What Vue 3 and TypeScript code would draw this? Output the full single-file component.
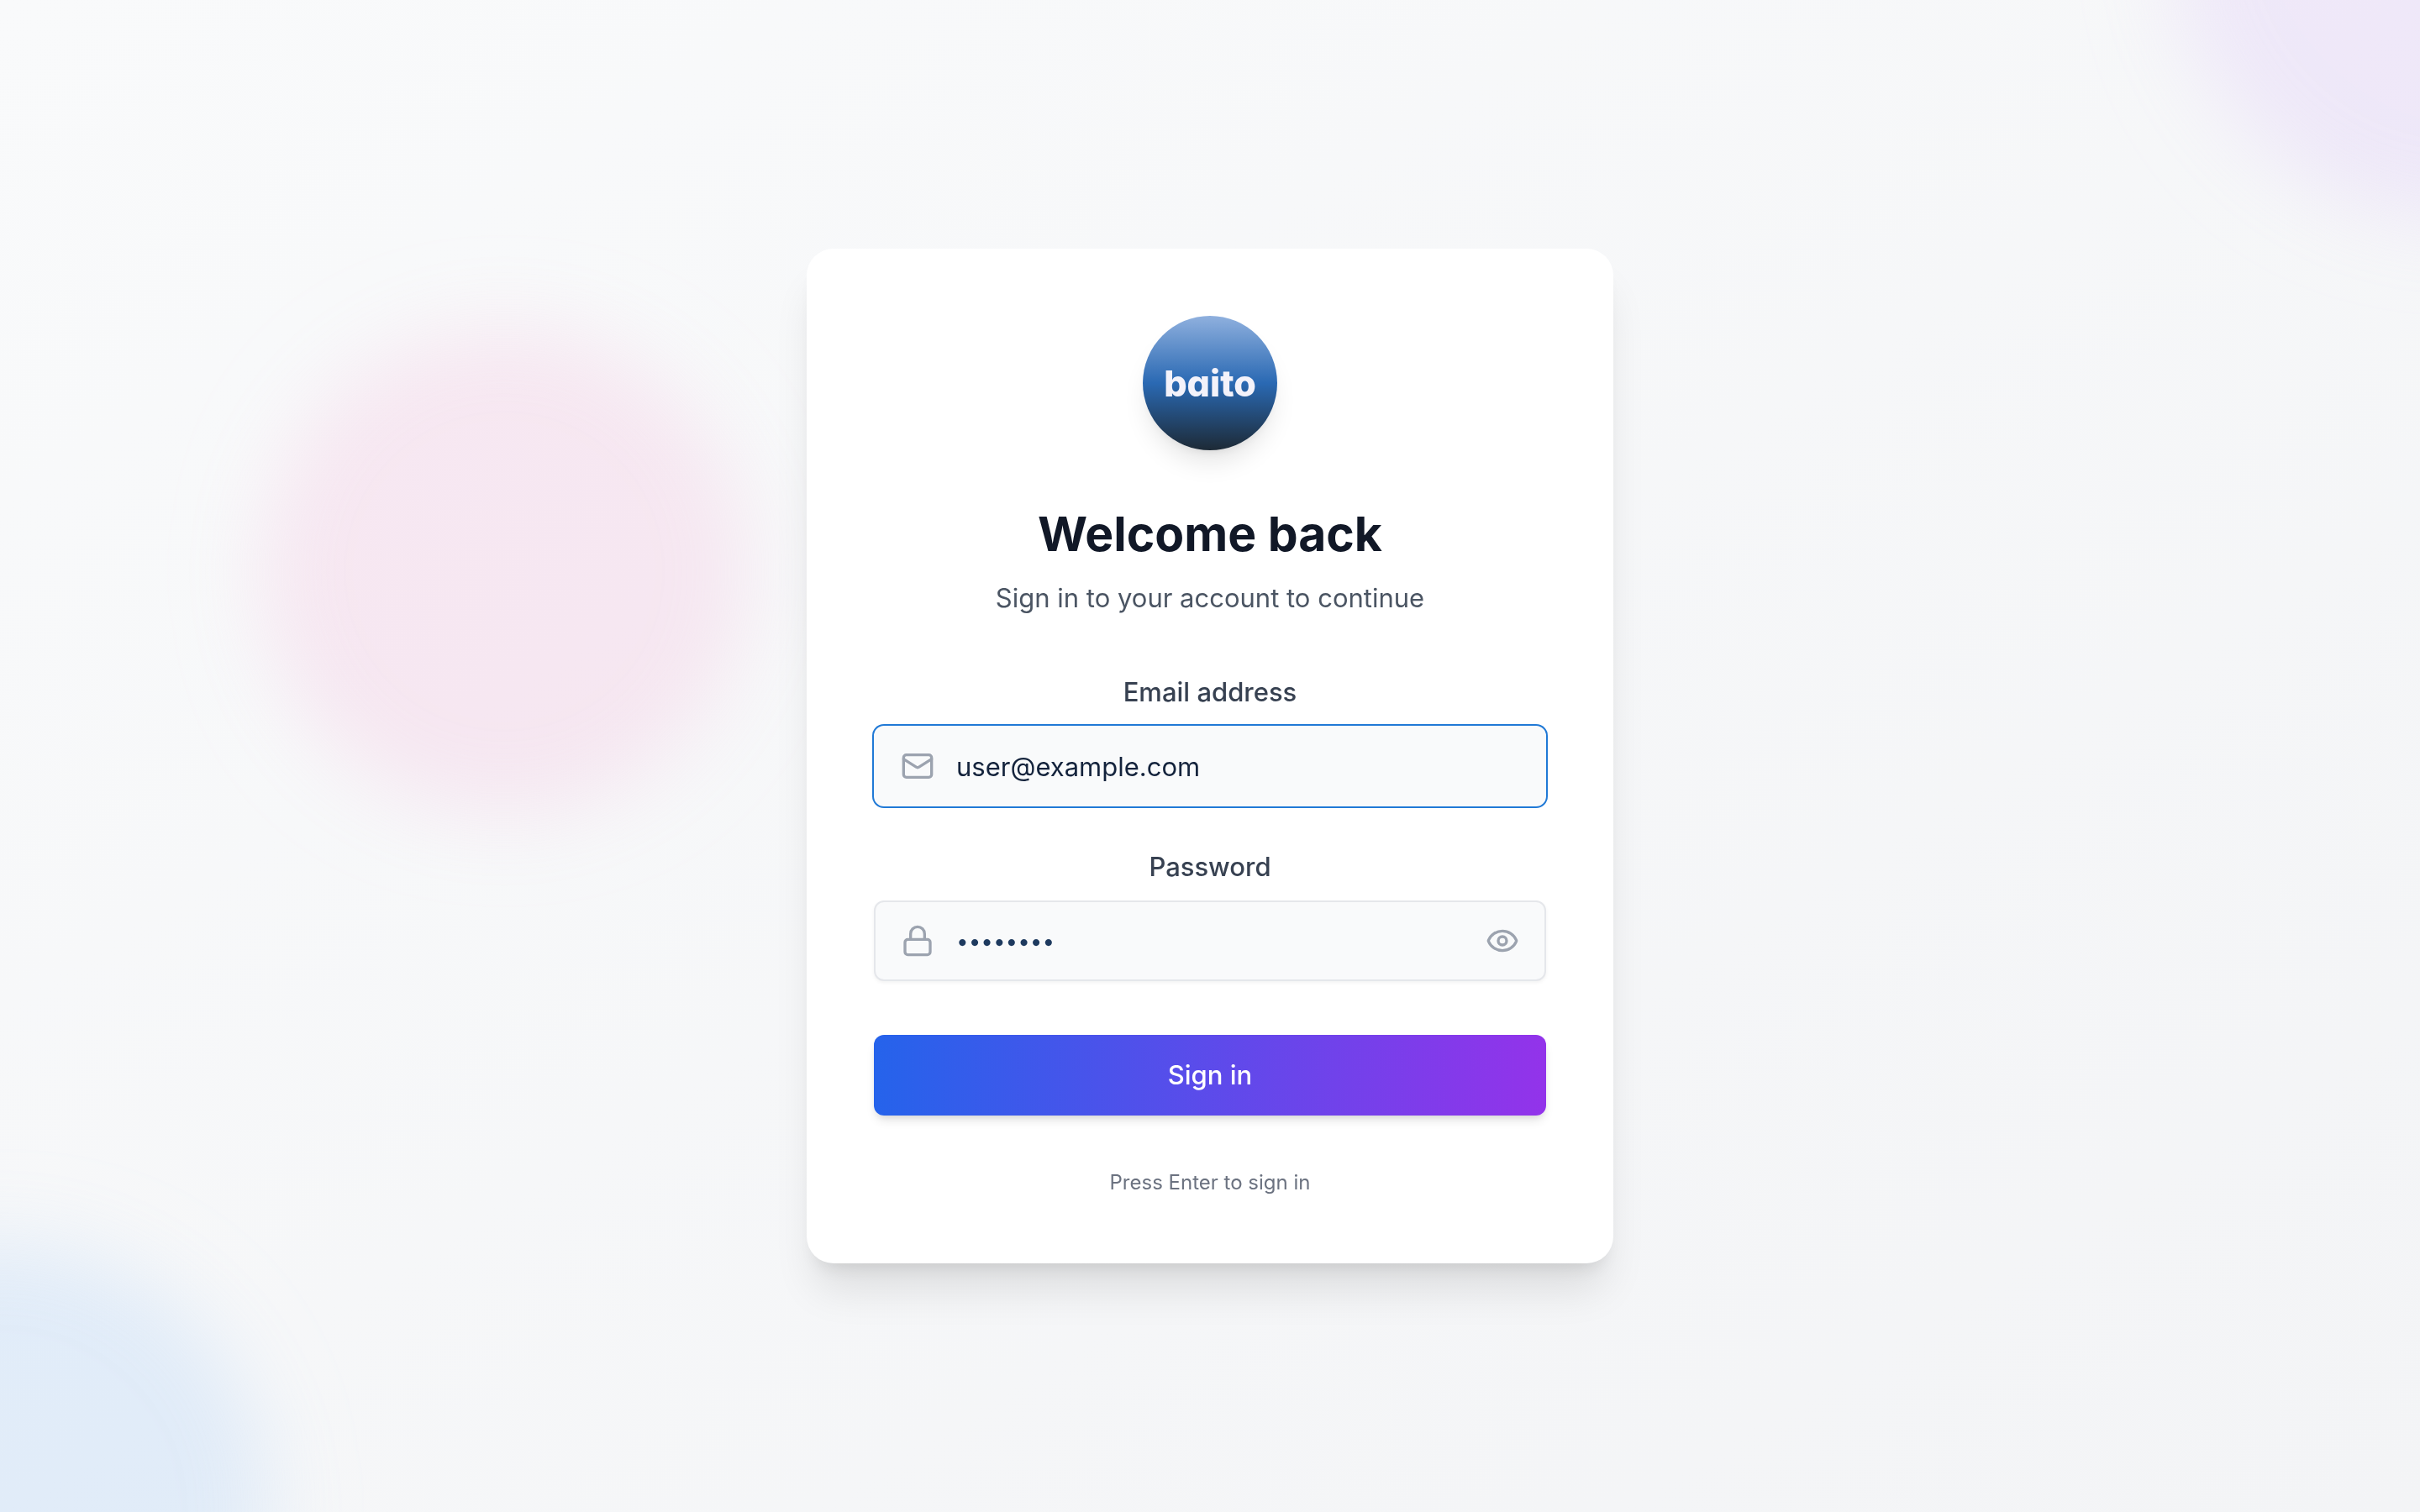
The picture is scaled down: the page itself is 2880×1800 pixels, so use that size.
<script setup lang="ts">
import { ref } from 'vue'

const email = ref('user@example.com')
const password = ref('password')
const showPassword = ref(false)
</script>

<template>
  <main class="page">
    <div class="blob blob-purple" aria-hidden="true"></div>
    <div class="blob blob-blue" aria-hidden="true"></div>
    <div class="blob blob-pink" aria-hidden="true"></div>

    <section class="card">
      <div class="logo"><span class="wordmark">baito</span></div>
      <h1>Welcome back</h1>
      <p class="subtitle">Sign in to your account to continue</p>

      <form @submit.prevent>
        <div class="field">
          <label for="email">Email address</label>
          <div class="control">
            <svg class="icon lead" viewBox="0 0 24 24" aria-hidden="true">
              <rect x="2" y="4" width="20" height="16" rx="2" />
              <path d="m22 7-8.97 5.7a1.94 1.94 0 0 1-2.06 0L2 7" />
            </svg>
            <input id="email" v-model="email" class="active" type="email" autocomplete="email" />
          </div>
        </div>

        <div class="field">
          <label for="password">Password</label>
          <div class="control">
            <svg class="icon lead" viewBox="0 0 24 24" aria-hidden="true">
              <rect x="3" y="11" width="18" height="11" rx="2" />
              <path d="M7 11V7a5 5 0 0 1 10 0v4" />
            </svg>
            <input
              id="password"
              v-model="password"
              class="secret"
              :type="showPassword ? 'text' : 'password'"
              autocomplete="current-password"
            />
            <button
              class="toggle"
              type="button"
              aria-label="Show password"
              @click="showPassword = !showPassword"
            >
              <svg class="icon" viewBox="0 0 24 24" aria-hidden="true">
                <path
                  d="M2.062 12.348a1 1 0 0 1 0-.696 10.75 10.75 0 0 1 19.876 0 1 1 0 0 1 0 .696 10.75 10.75 0 0 1-19.876 0"
                />
                <circle cx="12" cy="12" r="3" />
              </svg>
            </button>
          </div>
        </div>

        <button class="submit" type="submit">Sign in</button>
      </form>

      <p class="hint">Press Enter to sign in</p>
    </section>
  </main>
</template>

<style>
body {
  margin: 0;
}
</style>

<style scoped>
.page {
  position: relative;
  display: flex;
  align-items: center;
  justify-content: center;
  box-sizing: border-box;
  min-height: 100vh;
  padding: 32px;
  overflow: hidden;
  background: linear-gradient(to bottom right, #f9fafb, #f3f4f6);
  font-family: Inter, "Liberation Sans", sans-serif;
  font-size: 31px;
  line-height: 48px;
}

.blob {
  position: absolute;
  width: 640px;
  height: 640px;
  border-radius: 50%;
  mix-blend-mode: multiply;
  filter: blur(48px);
  opacity: 0.2;
}

.blob-purple {
  top: -432px;
  right: -398px;
  width: 696px;
  height: 696px;
  background: #d8b4fe;
}

.blob-blue {
  bottom: -320px;
  left: -320px;
  background: #93c5fd;
}

.blob-pink {
  top: 392px;
  left: 312px;
  width: 576px;
  height: 576px;
  background: #f9a8d4;
}

.card {
  position: relative;
  box-sizing: border-box;
  width: 100%;
  max-width: 960px;
  padding: 80px;
  border-radius: 32px;
  background: #fff;
  box-shadow: 0 40px 50px -10px rgb(0 0 0 / 0.1), 0 16px 20px -12px rgb(0 0 0 / 0.1);
  text-align: center;
}

.logo {
  display: flex;
  align-items: center;
  justify-content: center;
  width: 160px;
  height: 160px;
  margin: 0 auto 64px;
  border-radius: 50%;
  background: linear-gradient(#8fb0de, #2a69b3 50%, #1d2a36);
  box-shadow: 0 20px 30px -6px rgb(0 0 0 / 0.1), 0 8px 12px -8px rgb(0 0 0 / 0.1);
}

.wordmark {
  color: #f3f2fa;
  font-size: 43px;
  font-weight: 800;
  font-feature-settings: "cv11";
}

h1 {
  margin: 0 0 16px;
  color: #111827;
  font-size: 57px;
  font-weight: 700;
  line-height: 72px;
}

.subtitle {
  margin: 0 0 64px;
  color: #4b5563;
}

.field {
  margin-bottom: 48px;
}

label {
  display: block;
  margin-bottom: 16px;
  color: #374151;
  font-weight: 500;
}

.control {
  position: relative;
}

.icon {
  display: block;
  width: 40px;
  height: 40px;
  fill: none;
  stroke: #9ca3af;
  stroke-width: 2;
  stroke-linecap: round;
  stroke-linejoin: round;
}

.lead {
  position: absolute;
  top: 28px;
  left: 32px;
}

.toggle {
  position: absolute;
  top: 28px;
  right: 32px;
  padding: 0;
  border: 0;
  background: none;
  cursor: pointer;
}

input {
  display: block;
  box-sizing: border-box;
  width: 100%;
  height: 96px;
  padding: 0 96px;
  border: 2px solid #e5e7eb;
  border-radius: 12px;
  outline: 0;
  background: #f9fafb;
  box-shadow: 0 2px 4px rgb(0 0 0 / 0.05);
  color: #14233c;
  font: inherit;
}

input.active {
  border-color: #f9fafb;
  box-shadow: 0 0 0 2px #2079d6;
}

input.secret {
  color: #1e3a5f;
  font-size: 26px;
}

.submit {
  width: 100%;
  height: 96px;
  margin-top: 16px;
  border: 0;
  border-radius: 12px;
  background: linear-gradient(to right, #2563eb, #9333ea);
  box-shadow: 0 8px 12px -2px rgb(0 0 0 / 0.1), 0 4px 8px -4px rgb(0 0 0 / 0.1);
  color: #fff;
  font: inherit;
  font-weight: 500;
  cursor: pointer;
}

.hint {
  margin: 64px 0 0;
  color: #6b7280;
  font-size: 24px;
  line-height: 32px;
}
</style>
